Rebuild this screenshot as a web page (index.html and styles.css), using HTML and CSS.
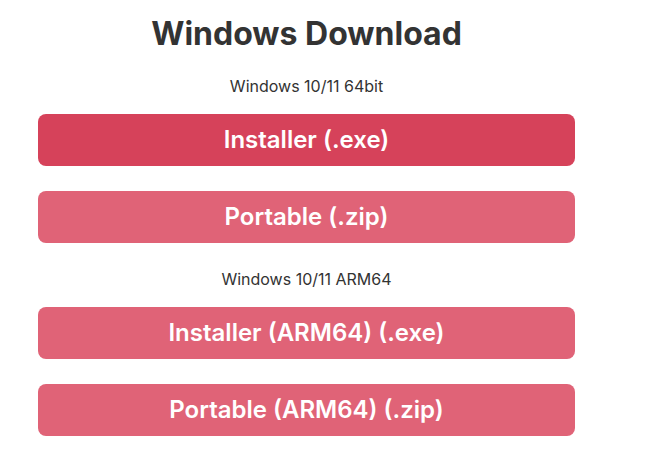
FILE: index.html
```html
<!DOCTYPE html>
<html lang="en">
<head>
    <meta charset="UTF-8">
    <title>Windows Download</title>
    <link rel="stylesheet" href="styles.css">
</head>
<body>
    <div id="container">
        <h1>Windows Download</h1>

        <p class="label first">Windows 10/11 64bit</p>
        <a class="btn primary" href="#">Installer (.exe)</a>
        <a class="btn" href="#">Portable (.zip)</a>

        <p class="label">Windows 10/11 ARM64</p>
        <a class="btn" href="#">Installer (ARM64) (.exe)</a>
        <a class="btn" href="#">Portable (ARM64) (.zip)</a>
    </div>
</body>
</html>
```

FILE: styles.css
```css
body {
    font-family: 'Inter', 'Noto Sans', sans-serif;
    background-color: #fff;
    color: #333;
    margin: 0;
    padding: 0;
}

#container {
    width: 537px;
    margin-left: 38px;
    display: flex;
    flex-direction: column;
    padding-top: 16px;
}

h1 {
    text-align: center;
    font-size: 32px;
    font-weight: 700;
    margin: 0;
    line-height: 36px;
}

.label {
    text-align: center;
    font-size: 16px;
    margin: 26px 0 18px;
    line-height: 20px;
}

.label.first {
    margin-top: 24px;
}

.btn {
    display: block;
    height: 52px;
    line-height: 52px;
    text-align: center;
    background-color: #e06377;
    color: #fff;
    font-size: 24px;
    font-weight: 600;
    text-decoration: none;
    border-radius: 8px;
    margin-bottom: 25px;
}

.btn.primary {
    background-color: #d6425a;
}

.label + .btn + .btn {
    margin-bottom: 0;
}
```
